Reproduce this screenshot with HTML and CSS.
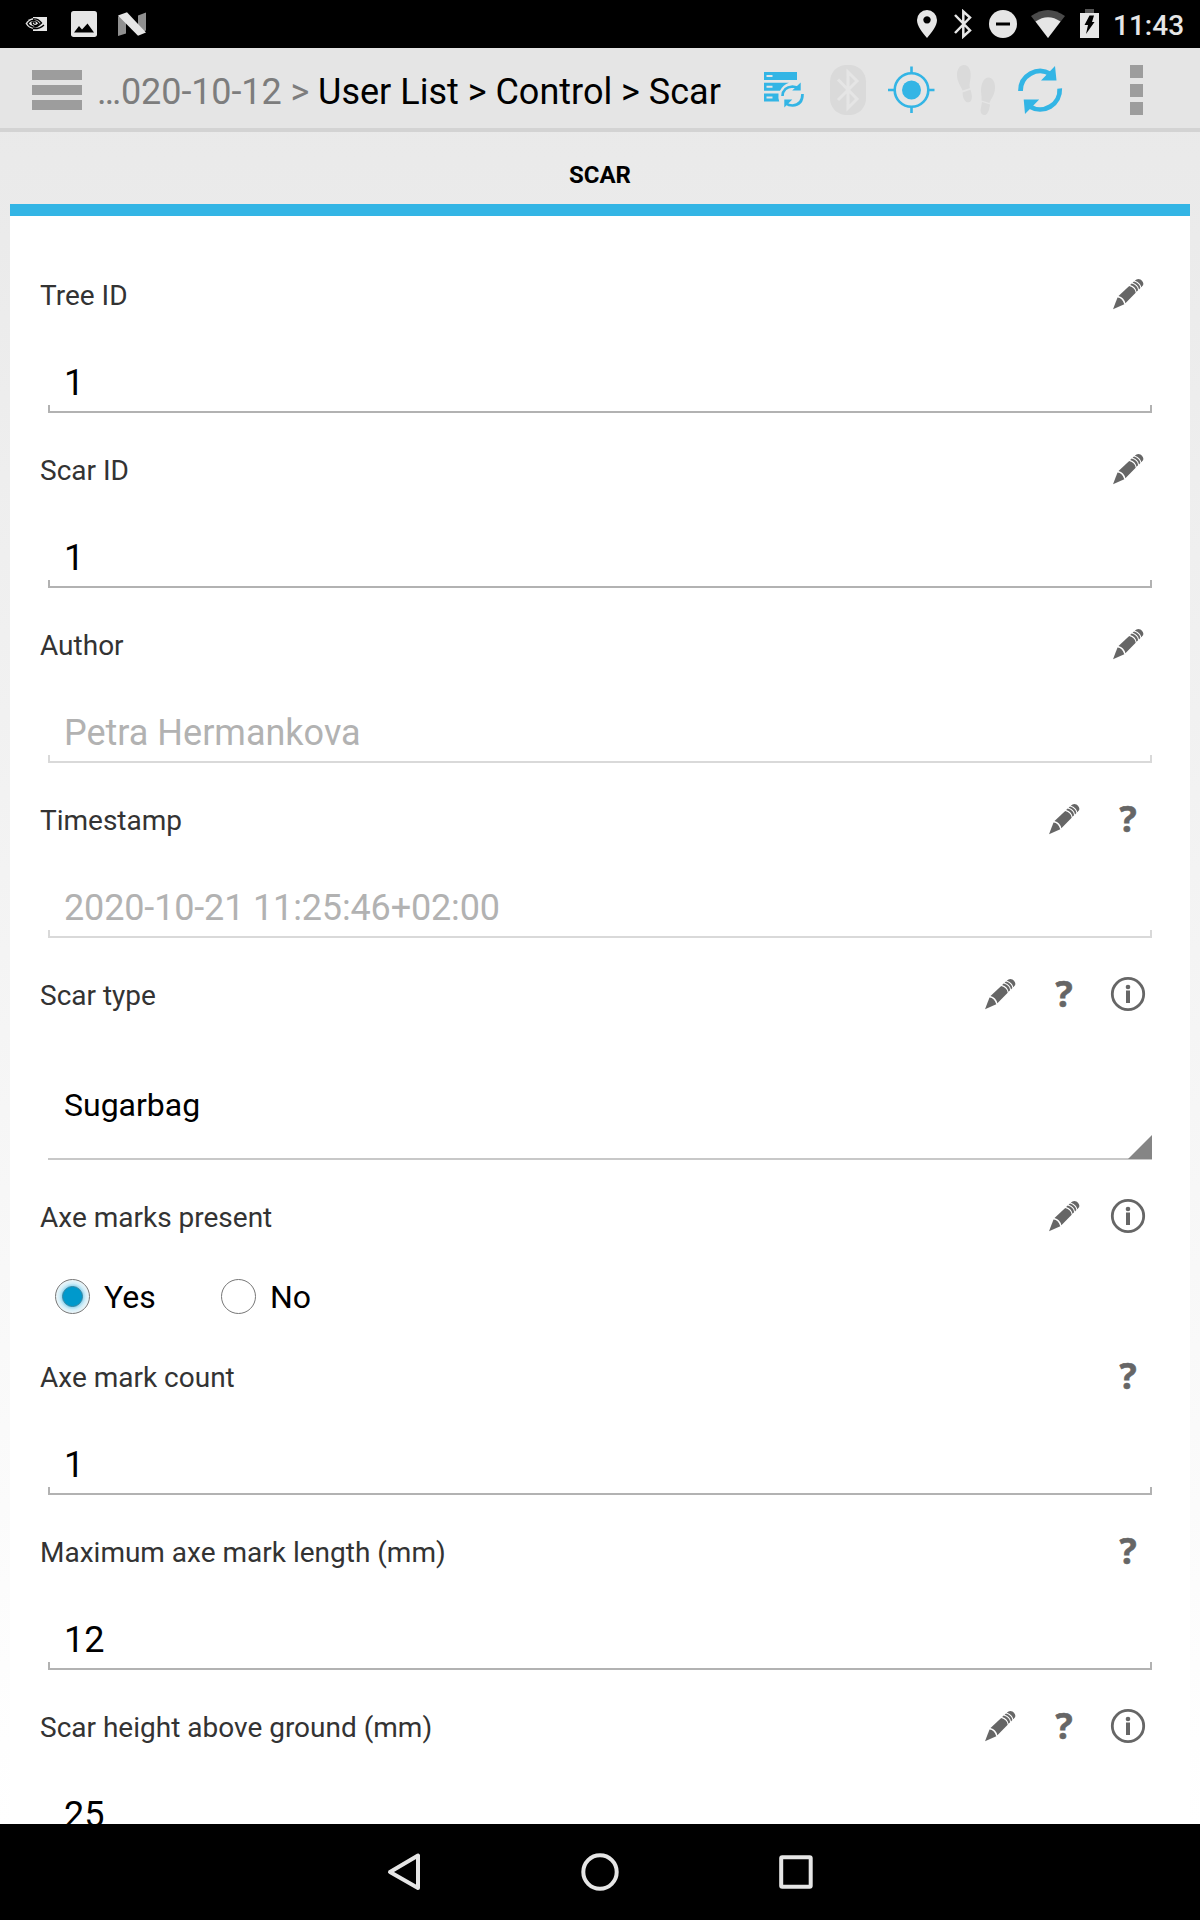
FILE: index.html
```html
<!DOCTYPE html>
<html lang="en">
<head>
<meta charset="utf-8">
<title>Scar</title>
<link rel="stylesheet" href="styles.css">
</head>
<body>
<svg class="defs" width="0" height="0" aria-hidden="true">
  <symbol id="pencil" viewBox="0 0 32 32">
    <path d="M1 31.200 5.500 19.500Q10.500 20 12.300 26.200Z"/>
    <path d="M6.500 18 17.200 8Q23 9.500 23.700 14.700L13.400 25.200Q12 19.500 6.500 18Z"/>
    <path d="M18.100 7 19.700 5.600Q25.500 7.200 26.100 12.300L24.500 13.800Q23.700 8.700 18.100 7Z"/>
    <path d="M20.600 4.800 22 3.500Q27.600 5 28.400 10L27 11.400Q26 6.500 20.600 4.800Z"/>
    <path d="M22.800 2.700Q25.300 0 28.500 1.500 32 4 31.200 7L29.300 9.200Q28.300 4.200 22.800 2.700Z"/>
  </symbol>
  <symbol id="info" viewBox="0 0 36 36">
    <circle cx="18" cy="18" r="15.700" fill="none" stroke="#666" stroke-width="2.800"/>
    <circle cx="18" cy="11" r="2.300"/><rect x="16" y="14.500" width="4" height="12.500"/>
  </symbol>
</svg>
<div class="screen">
  <header class="status">
    <div class="status-left">
      <svg width="24" height="16" viewBox="24 16 24 16"><path fill="#e6e6e6" d="M33 17h14v14H33Z"/><path fill="#e6e6e6" d="M25.500 23.500Q29 18 35 17.700q5 .300 8.500 6-3.500 5-9 5.300-6-.500-9-5.500Z"/><path fill="none" stroke="#000" stroke-width="1.300" d="M33 19Q38 18.200 41.500 23 37 27.500 33 27 29 26 28 23.500 30 20 34 20.300q3 .300 5 3-2 2.500-4.500 2.200-2.500-.800-2.500-2.800 1.500-1.500 3-.200v1.500M33 28.700Q40 29 44 25"/></svg>
      <svg width="28" height="28" viewBox="70 10 28 28"><rect x="71" y="11" width="26" height="26" rx="2.700" fill="#e6e6e6"/><path d="M74 32.500 79 26l3 3.500 5.500-6L94 32.500Z"/></svg>
      <svg width="30" height="26" viewBox="117 11 30 26"><path fill="#909090" d="M118 16.500l8-3v20l-8 2.500ZM138 15.500l8-3v18l-8 3Z"/><path fill="#e6e6e6" d="M118 15.500 127 12.300 146 32.500 138 35.700Z"/></svg>
    </div>
    <div class="status-right">
      <svg width="20" height="28" viewBox="917 10 20 28"><path fill="#e6e6e6" fill-rule="evenodd" d="M927 10a10 10 0 0 1 10 10c0 6-5 12-10 18-5-6-10-12-10-18a10 10 0 0 1 10-10Zm0 6.200a3.700 3.700 0 1 0 .010 0Z"/></svg>
      <svg width="18" height="30" viewBox="954 9 18 30"><path fill="none" stroke="#e6e6e6" stroke-width="2.500" d="M955 15l15 15.500-6.700 6V11.500l6.700 6L955 33"/></svg>
      <svg width="28" height="28" viewBox="989 10 28 28"><circle cx="1003" cy="24" r="14" fill="#e6e6e6"/><rect x="996" y="22.500" width="14" height="3"/></svg>
      <svg width="34" height="28" viewBox="1031 10 34 28"><path fill="#4a4a4a" d="M1031 16Q1048 4 1065 16L1048 38Z"/><path fill="#e6e6e6" d="M1035.500 21.500Q1048 13 1060.500 21.500L1048 38Z"/></svg>
      <svg width="20" height="30" viewBox="1080 9 20 30"><path fill="#555" d="M1085 9h9v4h-9Z"/><path fill="#e6e6e6" d="M1080 13h19v25h-19Z"/><path d="M1089.500 15.500h4.500l-2 6.500h2.500L1086 34l2-9h-3.500Z"/></svg>
      <span class="clock">11:43</span>
    </div>
  </header>

  <div class="actionbar">
    <div class="burger"><i></i><i></i><i></i></div>
    <div class="crumbs"><span class="past">…020-10-12 &gt;</span> User List &gt; Control &gt; Scar</div>
    <div class="tools">
      <svg width="64" height="64" viewBox="752 58 64 64" fill="#33b5e5"><path d="M764 72h33v8h-33Zm2.500 3v2h6v-2ZM764 82.700h25q-6 2-9 8h-16Zm2.500 3v2h6v-2ZM764 93.500h14.500q-.500 4 .700 8H764Zm2.500 3v2h6v-2Z" fill-rule="evenodd"/><path d="M782.500 96q.500-9 10-9.500 4 0 6.500 2.500M802.500 94q0 11-10 11.500-4 0-6.500-2" fill="none" stroke="#33b5e5" stroke-width="2.700"/><path d="M800.700 82.500v8h-8.500ZM784.300 107.500v-8h8Z"/></svg>
      <svg width="64" height="64" viewBox="816 58 64 64"><rect x="830" y="65" width="36" height="50" rx="16.500" fill="#dadada"/><path d="M838 79.500l19 19.500-9 9V72l9 9L838 100" fill="none" stroke="#e5e5e5" stroke-width="3"/></svg>
      <svg width="64" height="64" viewBox="880 58 64 64"><circle cx="911.500" cy="90" r="9.500" fill="#33b5e5"/><circle cx="911.500" cy="90" r="16.800" fill="none" stroke="#33b5e5" stroke-width="2.600"/><path d="M911.500 66.500v7M911.500 106v7M888 90h7M927.500 90h7" stroke="#33b5e5" stroke-width="2.600"/></svg>
      <svg width="64" height="64" viewBox="944 58 64 64" fill="#dadada"><path d="M964 65c5 0 7.500 6 6.500 13-.5 5-1.500 7-.5 10l-7.500 2.500C961 86 957 82 957 75c0-6 3-10 7-10ZM962.500 92.500l8-2.700c1.500 5 2 8 .5 11-1.500 2-4.500 2-6 0-2-2-2-5-2.500-8.300ZM988.500 77.500c4.500 0 7 5.500 6.500 11-.5 7-4 10-5.500 14.500l-8-2.500c.5-4-.5-6-.5-11 .5-7 3-12 7.500-12ZM982 102l8 2.500c-.5 4-1.500 9-4.500 10.500-3 .5-5-1.500-5-4.500Z"/></svg>
      <svg width="64" height="64" viewBox="1008 58 64 64" fill="#33b5e5"><path d="M1020.500 91A19.700 19.700 0 0 1 1050.500 74M1059.700 88.500A19.700 19.700 0 0 1 1029.700 106.500" fill="none" stroke="#33b5e5" stroke-width="4.800"/><path d="M1055 66l1.500 14.500H1041ZM1023.700 99.500h15.500L1025 114Z"/></svg>
    </div>
    <div class="overflow"><i></i><i></i><i></i></div>
  </div>

  <div class="tab">SCAR</div>

  <main class="form">
    <section class="field">
      <div class="head"><span class="label">Tree ID</span><svg class="ico"><use href="#pencil"/></svg></div>
      <div class="value">1</div><div class="line"></div>
    </section>
    <section class="field">
      <div class="head"><span class="label">Scar ID</span><svg class="ico"><use href="#pencil"/></svg></div>
      <div class="value">1</div><div class="line"></div>
    </section>
    <section class="field disabled">
      <div class="head"><span class="label">Author</span><svg class="ico"><use href="#pencil"/></svg></div>
      <div class="value">Petra Hermankova</div><div class="line"></div>
    </section>
    <section class="field disabled">
      <div class="head"><span class="label">Timestamp</span><svg class="ico"><use href="#pencil"/></svg><span class="help">?</span></div>
      <div class="value time">2020-10-21 11:25:46+02:00</div><div class="line"></div>
    </section>
    <section class="field">
      <div class="head"><span class="label">Scar type</span><svg class="ico"><use href="#pencil"/></svg><span class="help">?</span><svg class="ico info"><use href="#info"/></svg></div>
      <div class="select"><span>Sugarbag</span><svg class="corner" viewBox="0 0 24 24"><path d="M24 0v24H0Z"/></svg></div>
    </section>
    <section class="field">
      <div class="head"><span class="label">Axe marks present</span><svg class="ico"><use href="#pencil"/></svg><svg class="ico info"><use href="#info"/></svg></div>
      <div class="radios">
        <div class="radio"><span class="ring on"><i></i></span><span class="option">Yes</span></div>
        <div class="radio"><span class="ring"></span><span class="option">No</span></div>
      </div>
    </section>
    <section class="field">
      <div class="head"><span class="label">Axe mark count</span><span class="help">?</span></div>
      <div class="value">1</div><div class="line"></div>
    </section>
    <section class="field">
      <div class="head"><span class="label">Maximum axe mark length (mm)</span><span class="help">?</span></div>
      <div class="value">12</div><div class="line"></div>
    </section>
    <section class="field">
      <div class="head"><span class="label">Scar height above ground (mm)</span><svg class="ico"><use href="#pencil"/></svg><span class="help">?</span><svg class="ico info"><use href="#info"/></svg></div>
      <div class="value">25</div><div class="line"></div>
    </section>
  </main>

  <nav class="navbar">
    <svg width="40" height="40" viewBox="384 1852 40 40"><path d="M418 1855.500v32.500L390 1872Z" stroke-linejoin="round"/></svg>
    <svg width="40" height="40" viewBox="580 1852 40 40"><circle cx="600" cy="1872" r="16.700"/></svg>
    <svg width="40" height="40" viewBox="776 1852 40 40"><rect x="781.200" y="1857.300" width="29.500" height="29.500" rx="1"/></svg>
  </nav>
</div>
</body>
</html>
```

FILE: styles.css
```css
* { box-sizing: border-box; }
body { margin: 0; font-family: Roboto, "Liberation Sans", sans-serif; color: #000; }
svg { display: block; flex: none; }
.defs { position: absolute; }
.screen {
  width: 1200px; height: 1920px; overflow: hidden;
  display: flex; flex-direction: column;
  background: linear-gradient(#e8e8e8 0, #fff 1824px);
}

.status {
  height: 48px; flex: none; background: #000;
  display: flex; justify-content: space-between; align-items: center;
  padding: 0 17px 0 24px;
}
.status-left { display: flex; align-items: center; gap: 21px; }
.status-left svg:nth-child(2) { margin-left: 1px; }
.status-left svg:nth-child(3) { margin-left: -2px; }
.status-right { display: flex; align-items: center; }
.status-right svg:nth-child(2) { margin-left: 17px; }
.status-right svg:nth-child(3) { margin-left: 17px; }
.status-right svg:nth-child(4) { margin-left: 14px; }
.status-right svg:nth-child(5) { margin-left: 15px; }
.clock { width: 70px; margin: 3px 0 0 13px; font-size: 28px; line-height: 32px; font-weight: 500; color: #e6e6e6; white-space: nowrap; }

.actionbar {
  height: 84px; flex: none; display: flex; align-items: center;
  background: #e5e5e5; border-bottom: 4px solid #d3d3d3; padding-left: 32px;
}
.burger { width: 50px; margin-top: 4px; display: flex; flex-direction: column; gap: 5px; }
.burger i { height: 10px; background: #9d9d9d; }
.crumbs { width: 655px; margin: 8px 0 0 15px; font-size: 36px; line-height: 42px; white-space: nowrap; }
.past { color: #7d7d7d; letter-spacing: -0.1px; }
.tools { display: flex; margin-top: 4px; }
.overflow { display: flex; flex-direction: column; gap: 5.500px; margin: 4px 0 0 57.500px; }
.overflow i { width: 13px; height: 13px; background: #9d9d9d; }

.tab {
  height: 84px; flex: none; margin: 0 10px; padding-top: 14px;
  display: flex; align-items: center; justify-content: center;
  border-bottom: 12px solid #33b5e5; font-size: 24px; font-weight: 700;
}
.form { flex: 1; min-height: 0; overflow: hidden; margin: 0 10px; padding: 44px 30px 0; background: #fff; }
.field { margin-bottom: 22px; }
.head { height: 70px; display: flex; align-items: center; }
.label { flex: 1; font-size: 28px; color: #333; }
.ico { width: 32px; height: 32px; margin: 0 16px 2px; fill: #666; }
.info { width: 36px; height: 36px; margin: 0 14px 2px; }
.help { width: 64px; padding-bottom: 2px; text-align: center; font: 700 36px/36px "Open Sans", sans-serif; color: #666; -webkit-text-stroke: 0.6px #666; }
.value { height: 75px; padding: 32px 0 0 24px; font-size: 36px; line-height: 42px; }
.time { letter-spacing: -0.150px; }
.line { height: 8px; margin: 0 8px; border: solid #b2b2b2; border-width: 0 2px 2px; }
.disabled .value { color: #b2b2b2; }
.disabled .line { border-color: #d9d9d9; }

.select {
  height: 130px; margin: 0 8px; padding-left: 16px; border-bottom: 2px solid #c8c8c8;
  display: flex; align-items: center; justify-content: space-between; font-size: 32px;
}
.select span { padding-top: 22px; }
.corner { width: 24px; height: 24px; align-self: flex-end; margin-bottom: -1px; fill: #858585; }

.radios { height: 68px; padding: 20px 0 0 15px; display: flex; }
.radio { width: 166px; height: 48px; display: flex; align-items: center; gap: 14px; font-size: 32px; }
.option { padding-top: 2px; }
.ring { width: 35px; height: 35px; border: 1.500px solid #777; border-radius: 50%; display: flex; align-items: center; justify-content: center; }
.on { background: radial-gradient(circle closest-side, #8fd3ee 60%, #d3eef8 80%, #edf6f9 100%); }
.on i { width: 21px; height: 21px; border-radius: 50%; background: #0099cc; border: 1.500px solid #3a86a0; }

.navbar {
  height: 96px; flex: none; background: #000;
  display: flex; align-items: center; justify-content: center; gap: 156px;
}
.navbar svg { fill: none; stroke: #e6e6e6; stroke-width: 4; }
```
